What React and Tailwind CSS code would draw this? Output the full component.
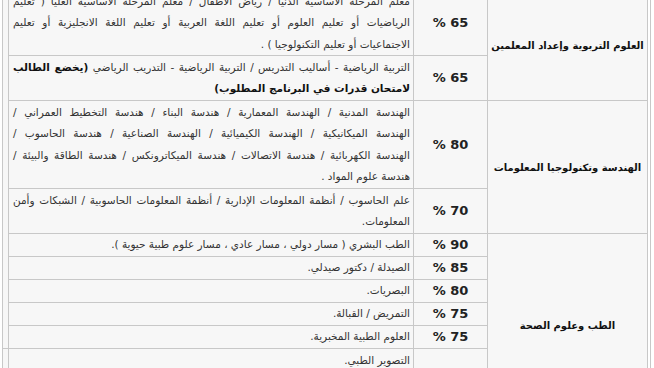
const line = "border-l border-b border-[#c8c8c8]";

const Desc = ({ lines, className = "" }) => (
  <div className={`${line} flex flex-col justify-center pr-[3px] pl-[4px] text-[10.5px] leading-[21.5px] text-[#333] ${className}`}>
    {lines.map((l, i) => (
      <div key={i} className={`whitespace-nowrap ${l.j ? "text-justify [text-align-last:justify]" : "text-right"}`}>
        {l.t}
        {l.b && <b className="font-bold text-[#111]">{l.b}</b>}
      </div>
    ))}
  </div>
);

const Pct = ({ v, className = "" }) => (
  <div className={`${line} flex items-center justify-center text-[13px] font-bold text-[#222] ${className}`}>
    {v}
  </div>
);

const Group = ({ name, className = "" }) => (
  <div className={`${line} flex items-center justify-center whitespace-nowrap text-[10px] font-bold text-[#111] ${className}`}>
    {name}
  </div>
);

export default function App() {
  return (
    <div className="w-[654px] h-[368px] overflow-hidden bg-white font-['DejaVu_Sans',sans-serif]">
      <div className="w-[651px] border-r border-[#c8c8c8] pl-[2px] pr-[2px] -mt-[9px]">
        <div
          dir="rtl"
          className="grid w-[646px] grid-cols-[160px_74px_405px_6px] grid-rows-[65px_45px_88px_45px_23px_23px_23px_23px_23px_69px] border-r border-[#c8c8c8] bg-[#f7f7f7]"
        >
          {/* العلوم التربوية */}
          <Group name="العلوم التربوية وإعداد المعلمين" className="col-start-1 row-start-1 row-span-2" />
          <Pct v="65 %" className="col-start-2 row-start-1" />
          <Desc
            className="col-start-3 row-start-1"
            lines={[
              { t: "معلم المرحلة الاساسية الدنيا / رياض الأطفال / معلم المرحلة الأساسية العليا ( تعليم", j: true },
              { t: "الرياضيات أو تعليم العلوم أو تعليم اللغة العربية أو تعليم اللغة الانجليزية أو تعليم", j: true },
              { t: "الاجتماعيات أو تعليم التكنولوجيا ) ." },
            ]}
          />
          <Pct v="65 %" className="col-start-2 row-start-2" />
          <Desc
            className="col-start-3 row-start-2"
            lines={[
              { t: "التربية الرياضية - أساليب التدريس / التربية الرياضية - التدريب الرياضي  ", b: "(يخضع الطالب", j: true },
              { t: "", b: "لامتحان قدرات في البرنامج المطلوب)" },
            ]}
          />

          {/* الهندسة */}
          <Group name="الهندسة وتكنولوجيا المعلومات" className="col-start-1 row-start-3 row-span-2" />
          <Pct v="80 %" className="col-start-2 row-start-3" />
          <Desc
            className="col-start-3 row-start-3"
            lines={[
              { t: "الهندسة المدنية / الهندسة المعمارية / هندسة البناء / هندسة التخطيط العمراني /", j: true },
              { t: "الهندسة الميكانيكية / الهندسة الكيميائية / الهندسة الصناعية / هندسة الحاسوب /", j: true },
              { t: "الهندسة الكهربائية / هندسة الاتصالات / هندسة الميكاترونكس / هندسة الطاقة والبيئة /", j: true },
              { t: "هندسة علوم المواد ." },
            ]}
          />
          <Pct v="70 %" className="col-start-2 row-start-4" />
          <Desc
            className="col-start-3 row-start-4"
            lines={[
              { t: "علم الحاسوب / أنظمة المعلومات الإدارية / أنظمة المعلومات الحاسوبية / الشبكات وأمن", j: true },
              { t: "المعلومات." },
            ]}
          />

          {/* الطب */}
          <Group name="الطب وعلوم الصحة" className="col-start-1 row-start-5 row-span-6" />
          <Pct v="90 %" className="col-start-2 row-start-5" />
          <Desc className="col-start-3 row-start-5" lines={[{ t: "الطب البشري ( مسار دولي ، مسار عادي ، مسار علوم طبية حيوية )." }]} />
          <Pct v="85 %" className="col-start-2 row-start-6" />
          <Desc className="col-start-3 row-start-6" lines={[{ t: "الصيدلة / دكتور صيدلي." }]} />
          <Pct v="80 %" className="col-start-2 row-start-7" />
          <Desc className="col-start-3 row-start-7" lines={[{ t: "البصريات." }]} />
          <Pct v="75 %" className="col-start-2 row-start-8" />
          <Desc className="col-start-3 row-start-8" lines={[{ t: "التمريض / القبالة." }]} />
          <Pct v="75 %" className="col-start-2 row-start-9" />
          <Desc className="col-start-3 row-start-9" lines={[{ t: "العلوم الطبية المخبرية." }]} />
          <div className={`${line} col-start-2 row-start-10`} />
          <div className={`${line} col-start-3 row-start-10 pr-[3px] pl-[4px] pt-[1px] text-[10.5px] leading-[21.5px] text-[#333]`}>
            التصوير الطبي.
          </div>

          <div className={`${line} col-start-4 row-start-1 row-span-9`} />
          <div className={`${line} col-start-4 row-start-10`} />
        </div>
      </div>
    </div>
  );
}
